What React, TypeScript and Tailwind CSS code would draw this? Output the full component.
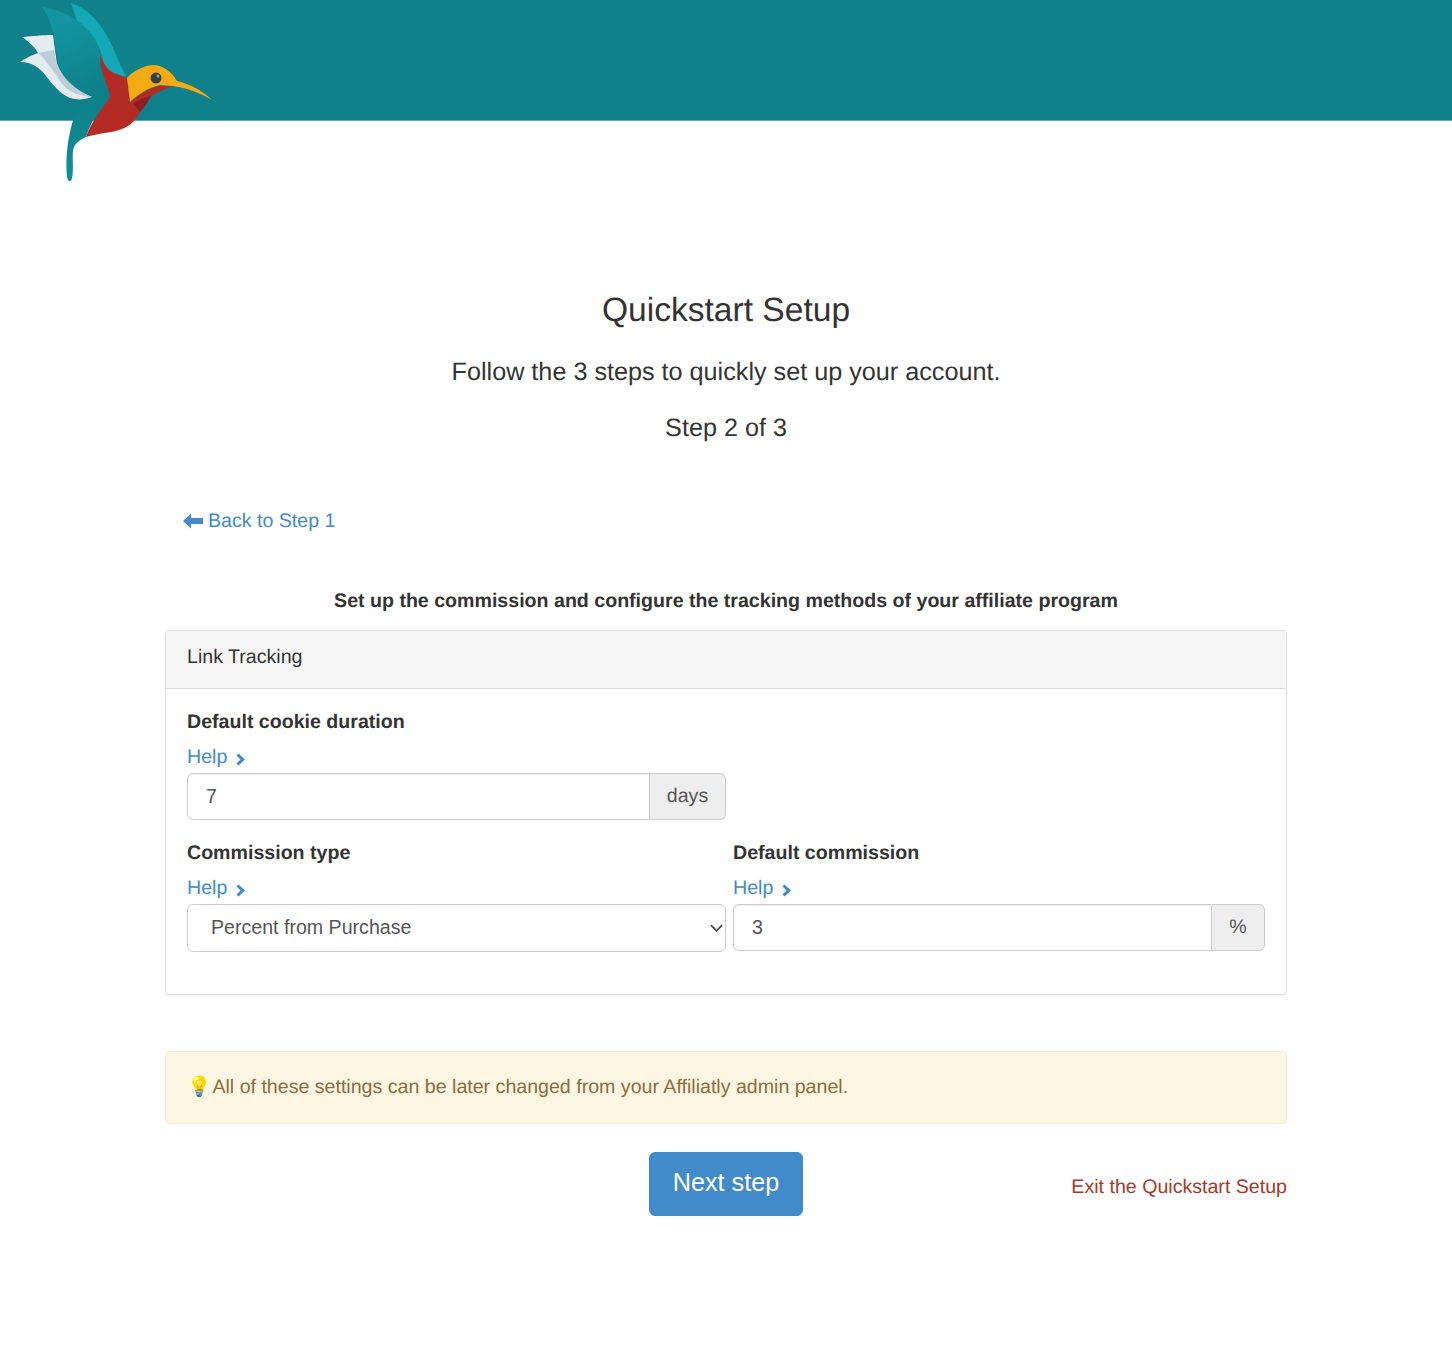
const ArrowLeft = () => (
  <svg viewBox="0 0 20 16" className="w-[20px] h-[16px] fill-[#428bca] shrink-0 -mt-[1px]">
    <path d="M0 8 L8 0.5 L8 5 L20 5 L20 11 L8 11 L8 15.5 Z" />
  </svg>
)

const Chevron = () => (
  <svg viewBox="0 0 10 13" className="w-[10px] h-[13px] fill-[#428bca] ml-[9px] mt-[3px] shrink-0">
    <path d="M2.5 0.5 L9 6.5 L2.5 12.5 L0.5 10.5 L4.5 6.5 L0.5 2.5 Z" />
  </svg>
)

const Logo = () => (
  <svg viewBox="0 0 230 190" className="absolute left-0 top-0 w-[230px] h-[190px]">
    <defs>
      <linearGradient id="wing" x1="0" y1="0" x2="0.4" y2="1">
        <stop offset="0" stopColor="#1497a3" />
        <stop offset="0.45" stopColor="#11909b" />
        <stop offset="1" stopColor="#0e8089" />
      </linearGradient>
      <linearGradient id="tail" x1="0" y1="0" x2="0" y2="1">
        <stop offset="0" stopColor="#0e7f88" />
        <stop offset="1" stopColor="#0f8f9a" />
      </linearGradient>
    </defs>
    <path d="M71 3 C86 8 99 20 108 38 C115 50 118 62 126 76 L112 80 L78 24 Z" fill="#12a8b5" />
    <path d="M42 7 C60 10 76 17 86 28 C95 38 101 48 103 60 L112 90 L84 100 C68 90 58 70 56 50 C54 32 50 18 42 7 Z" fill="url(#wing)" />
    <path d="M86 137 C79 140 74 144 73 151 C72 160 74 170 72 178 C71 183 68 182 67 177 C66 165 66 150 70 132 C73 118 77 108 82 98 L110 92 C102 108 92 118 86 137 Z" fill="url(#tail)" />
    <path d="M22 37 C32 36 44 35 53 35 L58 72 C68 86 80 93 92 97 C84 100 76 100 70 98 C60 94 52 84 46 76 C40 68 32 62 20 62 C26 58 32 55 38 53 C34 46 28 41 22 37 Z" fill="#e4ebf1" />
    <path d="M38 53 L54 50 C56 68 66 86 92 97 C80 96 70 93 62 84 C54 72 46 60 38 53 Z" fill="#bccdd8" />
    <path d="M100 55 C103 62 106 68 112 72 C118 75 124 76 127 78 L130 102 L140 112 C136 120 130 126 122 129 C112 133 98 133 86 137 C90 124 100 112 110 97 C108 84 99 70 100 55 Z" fill="#b32b24" />
    <path d="M130 102 C140 94 150 87 160 86 L173 86 C165 89 158 92 150 97 L140 112 Z" fill="#b32b24" />
    <path d="M133 104 C138 100 145 97 151 96 C148 102 144 108 140 112 Z" fill="#8f1c20" />
    <path d="M127 78 C132 72 142 66 153 65 C163 65 172 72 177 81 C190 84 203 91 212 100 C202 94 188 88 173 86 L160 85 C148 88 138 94 130 102 Z" fill="#f4ab13" />
    <circle cx="156" cy="78" r="5.5" fill="#3a3f44" />
    <circle cx="158" cy="76" r="1.5" fill="#9aa0a5" />
  </svg>
)

const HelpLink = () => (
  <a className="flex items-center h-[24px] pt-[2px] text-[19.6px] text-[#428bca]">
    Help
    <Chevron />
  </a>
)

const FieldLabel = ({ children }: { children: string }) => (
  <label className="block font-bold text-[19.6px] leading-[28px] text-[#333]">{children}</label>
)

const AddonInput = ({ value, addon, addonWidth }: { value: string; addon: string; addonWidth: string }) => (
  <div className="flex h-[47px] text-[19.6px]">
    <input
      readOnly
      value={value}
      className="flex-1 min-w-0 border border-[#ccc] rounded-l-[6px] px-[18px] text-[#555] shadow-[inset_0_1px_1px_rgba(0,0,0,0.075)] outline-none"
    />
    <span className={`${addonWidth} flex items-center justify-center bg-[#eee] border border-l-0 border-[#ccc] rounded-r-[6px] text-[#555]`}>
      {addon}
    </span>
  </div>
)

export default function App() {
  return (
    <div className="relative min-h-[1364px] bg-white font-['Liberation_Sans',sans-serif] text-[#333] [text-rendering:geometricPrecision]">
      <header className="h-[121px] bg-[#10808b] border-b border-[#5fa9af]" />
      <Logo />

      <main className="w-[1122px] mx-auto">
        <h2 className="mt-[167px] text-center text-[33.6px] leading-[46px]">Quickstart Setup</h2>
        <p className="mt-[20px] text-center text-[25.2px] leading-[36px]">Follow the 3 steps to quickly set up your account.</p>
        <p className="mt-[20px] text-center text-[25.2px] leading-[36px]">Step 2 of 3</p>

        <a className="flex items-center gap-[5px] mt-[61px] ml-[18px] text-[19.6px] leading-[28px] text-[#428bca]">
          <ArrowLeft />
          Back to Step 1
        </a>

        <p className="mt-[52px] text-center font-bold text-[19.6px] leading-[28px]">
          Set up the commission and configure the tracking methods of your affiliate program
        </p>

        <section className="mt-[15px] h-[365px] border border-[#ddd] rounded-[4px] shadow-[0_1px_1px_rgba(0,0,0,0.05)]">
          <div className="h-[58px] flex items-center px-[21px] pb-[3px] bg-[#f5f5f5] border-b border-[#ddd] rounded-t-[4px] text-[19.6px]">
            Link Tracking
          </div>
          <div className="px-[21px] pt-[19px]">
            <div className="w-[539px]">
              <FieldLabel>Default cookie duration</FieldLabel>
              <div className="mt-[9px]"><HelpLink /></div>
              <div className="mt-[4px]"><AddonInput value="7" addon="days" addonWidth="w-[76px]" /></div>
            </div>
            <div className="flex gap-[7px] mt-[19px]">
              <div className="w-[539px]">
                <FieldLabel>Commission type</FieldLabel>
                <div className="mt-[9px]"><HelpLink /></div>
                <div className="relative mt-[4px] h-[48px]">
                  <select className="appearance-none w-full h-full border border-[#ccc] rounded-[6px] pl-[23px] pr-[20px] text-[19.6px] text-[#555] bg-white outline-none">
                    <option>Percent from Purchase</option>
                  </select>
                  <svg viewBox="0 0 14 8" className="absolute right-[3px] top-[20px] w-[13px] h-[8px] fill-none stroke-[#444] stroke-[1.8] pointer-events-none">
                    <path d="M1 1 L7 7 L13 1" />
                  </svg>
                </div>
              </div>
              <div className="flex-1 min-w-0">
                <FieldLabel>Default commission</FieldLabel>
                <div className="mt-[9px]"><HelpLink /></div>
                <div className="mt-[4px]"><AddonInput value="3" addon="%" addonWidth="w-[53px]" /></div>
              </div>
            </div>
          </div>
        </section>

        <div className="mt-[56px] h-[73px] flex items-center px-[21px] bg-[#fdf6e3] border border-[#f7ecd0] rounded-[4px] text-[19.6px] text-[#8a6d3b]">
          <span className="mr-[1px]">💡</span>
          All of these settings can be later changed from your Affiliatly admin panel.
        </div>

        <div className="relative mt-[28px] flex justify-center">
          <button className="w-[154px] h-[64px] pb-[2px] bg-[#428bca] border border-[#428bca] rounded-[6px] text-white text-[25.2px]">
            Next step
          </button>
          <a className="absolute right-0 top-[21px] text-[19.6px] leading-[28px] text-[#a93a27]">Exit the Quickstart Setup</a>
        </div>
      </main>
    </div>
  )
}
